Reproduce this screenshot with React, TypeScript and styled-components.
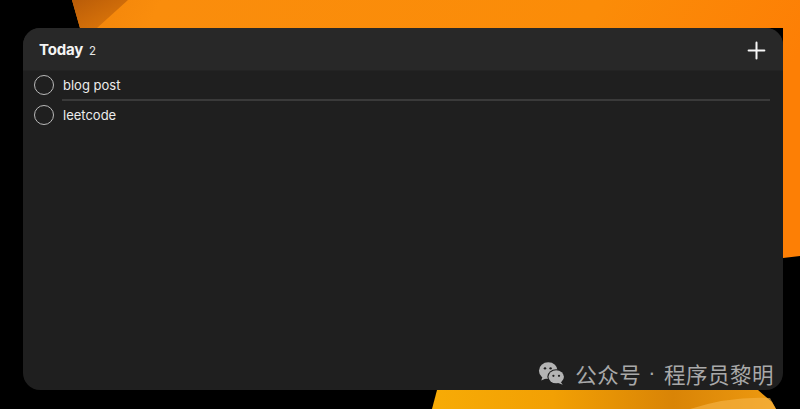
import styled, { createGlobalStyle } from 'styled-components';
import { Plus } from 'lucide-react';

const GlobalStyle = createGlobalStyle`
    html, body {
        margin: 0;
        padding: 0;
        background: #000;
        width: 800px;
        height: 409px;
        overflow: hidden;
    }
    body {
        font-family: Inter, "Liberation Sans", sans-serif;
        -webkit-font-smoothing: antialiased;
    }
`;

interface Task {
    id: number;
    title: string;
}

const tasks: Task[] = [
    { id: 1, title: 'blog post' },
    { id: 2, title: 'leetcode' },
];

const Wallpaper = () => (
    <Backdrop width="800" height="409" viewBox="0 0 800 409">
        <defs>
            <linearGradient id="topOrange" x1="0" y1="0" x2="1" y2="0.2">
                <stop offset="0" stopColor="#f0830a" />
                <stop offset="0.12" stopColor="#fa8d0c" />
                <stop offset="0.7" stopColor="#fb8c08" />
                <stop offset="1" stopColor="#fd7f05" />
            </linearGradient>
            <linearGradient id="fold" x1="0" y1="0" x2="1" y2="1">
                <stop offset="0" stopColor="#b95c08" />
                <stop offset="1" stopColor="#e27a0a" />
            </linearGradient>
            <linearGradient id="bottomOrange" x1="0" y1="0" x2="1" y2="0">
                <stop offset="0" stopColor="#f7ab06" />
                <stop offset="0.35" stopColor="#f2a004" />
                <stop offset="0.7" stopColor="#d98406" />
                <stop offset="1" stopColor="#ee9a10" />
            </linearGradient>
        </defs>
        <rect width="800" height="409" fill="#000" />
        <polygon points="72,0 800,0 800,256 783,258 783,28 80,28" fill="url(#topOrange)" />
        <polygon points="72,0 128,0 97,28 80,28" fill="url(#fold)" />
        <polygon points="432,409 437,390 758,390 772,402 776,409" fill="url(#bottomOrange)" />
        <path d="M690 409 Q730 396 770 398 L776 409 Z" fill="#f6b64a" opacity="0.6" />
    </Backdrop>
);

const WeChatIcon = () => (
    <svg width="28" height="25" viewBox="0 0 30 26">
        <ellipse cx="11" cy="10" rx="10" ry="9" fill="#b4b4b4" />
        <path d="M5 16 L3.5 20.5 L9 18 Z" fill="#b4b4b4" />
        <circle cx="7.5" cy="7.5" r="1.3" fill="#1f1f1f" />
        <circle cx="13.5" cy="7.5" r="1.3" fill="#1f1f1f" />
        <ellipse cx="19.5" cy="16.5" rx="9.5" ry="8" fill="#1f1f1f" />
        <ellipse cx="19.5" cy="16.5" rx="8.3" ry="7" fill="#b4b4b4" />
        <path d="M24 21.5 L26.5 25 L21 23 Z" fill="#b4b4b4" />
        <circle cx="16.5" cy="15.5" r="1.2" fill="#1f1f1f" />
        <circle cx="22.5" cy="15.5" r="1.2" fill="#1f1f1f" />
    </svg>
);

const App = () => {
    return (
        <Screen>
            <GlobalStyle />
            <Wallpaper />
            <Card>
                <Header>
                    <TitleGroup>
                        <Title>Today</Title>
                        <Count>{tasks.length}</Count>
                    </TitleGroup>
                    <AddButton aria-label="Add task">
                        <Plus size={27} strokeWidth={1.8} />
                    </AddButton>
                </Header>
                <TaskList>
                    {tasks.map((task, i) => (
                        <TaskRow key={task.id} $last={i === tasks.length - 1}>
                            <CheckCircle />
                            <TaskTitle>{task.title}</TaskTitle>
                        </TaskRow>
                    ))}
                </TaskList>
                <Watermark>
                    <WeChatIcon />
                    <WatermarkText>
                        公众号<Dot>·</Dot>程序员黎明
                    </WatermarkText>
                </Watermark>
            </Card>
        </Screen>
    );
};

const Screen = styled.div`
    position: relative;
    width: 800px;
    height: 409px;
    padding: 28px 17px 19px 23px;
    box-sizing: border-box;
`;

const Backdrop = styled.svg`
    position: absolute;
    inset: 0;
    display: block;
`;

const Card = styled.div`
    position: relative;
    display: flex;
    flex-direction: column;
    width: 760px;
    height: 362px;
    background-color: #1f1f1f;
    border-radius: 17px;
    overflow: hidden;
`;

const Header = styled.div`
    display: flex;
    align-items: center;
    justify-content: space-between;
    height: 43px;
    padding: 0 13px 0 16px;
    background-color: #282828;
    border-bottom: 1px solid #232323;
    box-sizing: border-box;
`;

const TitleGroup = styled.div`
    display: flex;
    align-items: baseline;
    gap: 6px;
`;

const Title = styled.span`
    color: #f4f4f4;
    font-size: 15px;
    font-weight: 700;
    letter-spacing: -0.2px;
`;

const Count = styled.span`
    color: #e6e6e6;
    font-size: 11.5px;
`;

const AddButton = styled.button`
    display: flex;
    align-items: center;
    justify-content: center;
    padding: 0;
    margin-top: 2px;
    border: none;
    background: none;
    color: #f6f6f6;
    cursor: pointer;
`;

const TaskList = styled.div`
    display: flex;
    flex-direction: column;
    flex: 1;
`;

const TaskRow = styled.div<{ $last: boolean }>`
    position: relative;
    display: flex;
    align-items: center;
    gap: 9px;
    height: 28px;
    padding-left: 11px;

    &::after {
        content: '';
        display: ${(props) => (props.$last ? 'none' : 'block')};
        position: absolute;
        left: 39px;
        right: 13px;
        bottom: -2px;
        height: 2px;
        background-color: #3a3a3a;
    }

    & + & {
        margin-top: 2px;
    }
`;

const CheckCircle = styled.span`
    width: 20px;
    height: 20px;
    border: 1.5px solid #b9b9b9;
    border-radius: 50%;
    box-sizing: border-box;
    flex-shrink: 0;
`;

const TaskTitle = styled.span`
    color: #ececec;
    font-size: 13px;
`;

const Watermark = styled.div`
    position: absolute;
    right: 9px;
    bottom: 1px;
    display: flex;
    align-items: center;
    gap: 9px;
`;

const WatermarkText = styled.span`
    display: flex;
    align-items: center;
    color: #a9a9a9;
    font-family: "Noto Sans CJK SC", sans-serif;
    font-size: 21.5px;
    letter-spacing: 0.5px;
`;

const Dot = styled.span`
    font-family: "Liberation Sans", sans-serif;
    margin: 0 8px 0 7px;
`;

export default App;
